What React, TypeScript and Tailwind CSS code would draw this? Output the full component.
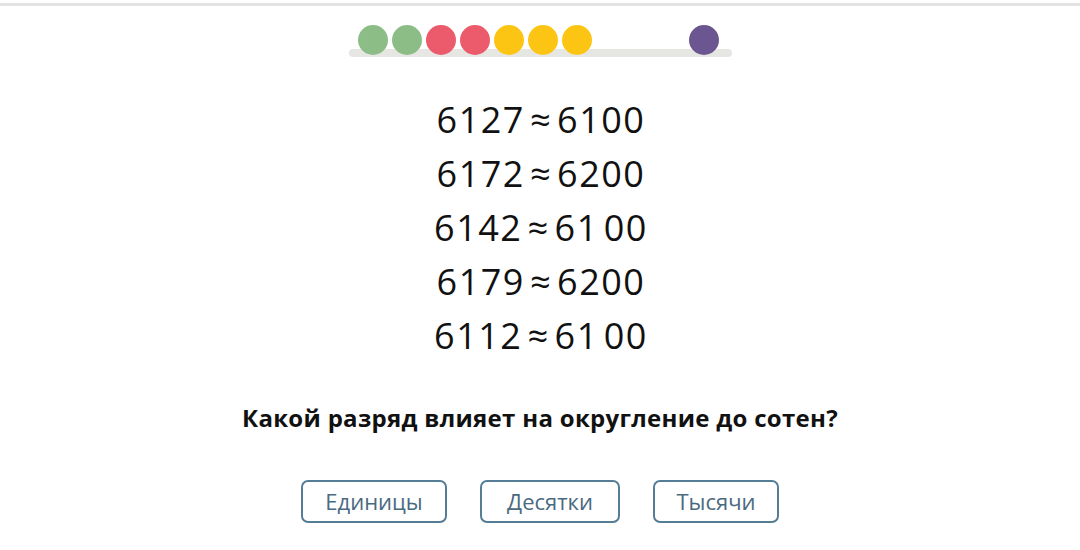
import React from 'react';

const dots = ['#8dbd87', '#8dbd87', '#ec5b6b', '#ec5b6b', '#fdc513', '#fdc513', '#fdc513'];

const rows: [string, string, boolean][] = [
  ['6127', '6100', false],
  ['6172', '6200', false],
  ['6142', '6100', true],
  ['6179', '6200', false],
  ['6112', '6100', true],
];

const answers = [
  { label: 'Единицы', w: 'w-[146px]' },
  { label: 'Десятки', w: 'w-[140px]' },
  { label: 'Тысячи', w: 'w-[126px]' },
];

const App: React.FC = () => {
  return (
    <div className="w-[1080px] h-[550px] bg-white overflow-hidden font-['Open_Sans','Liberation_Sans',sans-serif]">
      <div className="h-[3px] mt-[3px] bg-[#e3e3e3]" />

      {/* Progress */}
      <div className="flex justify-center mt-[19px]">
        <div className="relative w-[383px] h-[33px]">
          <div className="absolute left-0 right-0 top-[24px] h-[8px] rounded-full bg-[#e6e6e3]" />
          <div className="relative flex gap-[4px] pl-[9px]">
            {dots.map((c, i) => (
              <div key={i} className="w-[30px] h-[30px] rounded-full" style={{ backgroundColor: c }} />
            ))}
            <div className="w-[30px] h-[30px] rounded-full bg-[#6c5691] ml-[93px]" />
          </div>
        </div>
      </div>

      {/* Equations */}
      <div className="flex flex-col items-center mt-[35px] text-[36px] leading-[54px] font-normal tracking-[1.5px] text-[#111]">
        {rows.map(([a, b, gap], i) => (
          <div key={i} className="flex items-center pl-[2px]">
            <span>{a}</span>
            <span className="mx-[5px] text-[36px]">≈</span>
            <span>
              {b.slice(0, 2)}
              <span className={gap ? 'ml-[5px]' : ''}>{b.slice(2)}</span>
            </span>
          </div>
        ))}
      </div>

      {/* Question */}
      <div className="text-center mt-[37px] text-[24px] font-bold text-[#111] tracking-[0.3px]">
        Какой разряд влияет на округление до сотен?
      </div>

      {/* Answers */}
      <div className="flex justify-center gap-[33px] mt-[44px]">
        {answers.map((a) => (
          <button
            key={a.label}
            className={`${a.w} h-[43px] border-2 border-[#557d96] rounded-[7px] text-[22px] text-[#4a6a80] flex items-center justify-center`}
          >
            {a.label}
          </button>
        ))}
      </div>
    </div>
  );
};

export default App;
